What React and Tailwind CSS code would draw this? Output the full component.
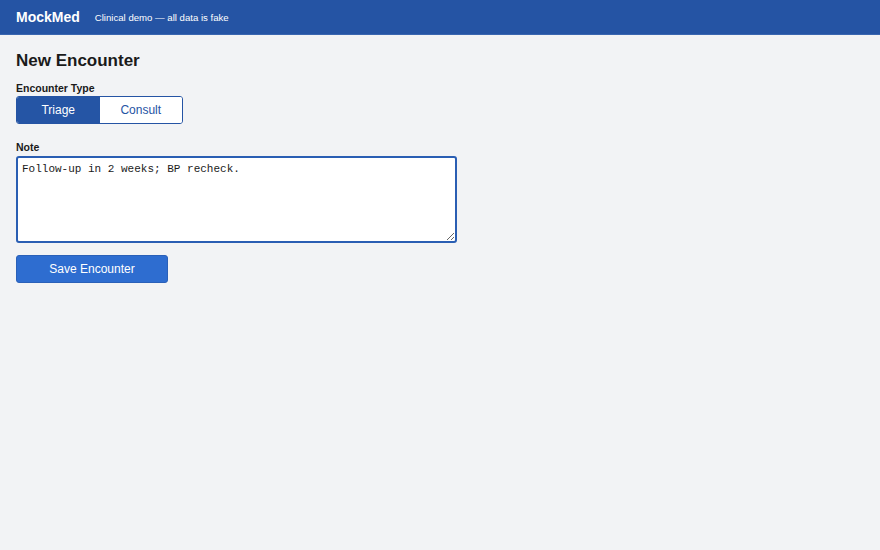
export default function App() {
  return (
    <div className="min-h-[550px] bg-[#f2f3f5] font-['Liberation_Sans',Arial,sans-serif] text-[#1a1a1a]">
      <header className="h-[35px] bg-[#2554a4] flex items-center px-4 gap-[15px] border-b border-[#3a66b0]">
        <span className="text-white font-bold text-[14px]">MockMed</span>
        <span className="text-white text-[9.6px] mt-[3px]">Clinical demo — all data is fake</span>
      </header>
      <main className="px-4 pt-[16px]">
        <h1 className="text-[17px] font-bold leading-[20px]">New Encounter</h1>
        <div className="mt-[11px] text-[10.5px] font-bold leading-[12px]">Encounter Type</div>
        <div className="mt-[2px] flex w-[167px] h-[28px] rounded-[3px] border border-[#2554a4] overflow-hidden">
          <button className="flex-1 bg-[#2555a5] text-white text-[12px]">Triage</button>
          <button className="flex-1 bg-white text-[#2554a4] text-[12px]">Consult</button>
        </div>
        <div className="mt-[17px] text-[10.5px] font-bold leading-[12px]">Note</div>
        <textarea
          className="mt-[3px] block w-[441px] h-[87px] rounded-[3px] border-2 border-[#2a5eb3] bg-white pl-[4px] pr-[5px] pt-[5px] pb-[4px] font-['Liberation_Mono',monospace] text-[11px] leading-[13px] text-[#1a1a1a] outline-none"
          defaultValue="Follow-up in 2 weeks; BP recheck."
        />
        <button className="mt-[12px] w-[152px] h-[28px] rounded-[3px] bg-[#2e6dd0] border border-[#2a60b8] text-white text-[12px]">
          Save Encounter
        </button>
      </main>
    </div>
  );
}
